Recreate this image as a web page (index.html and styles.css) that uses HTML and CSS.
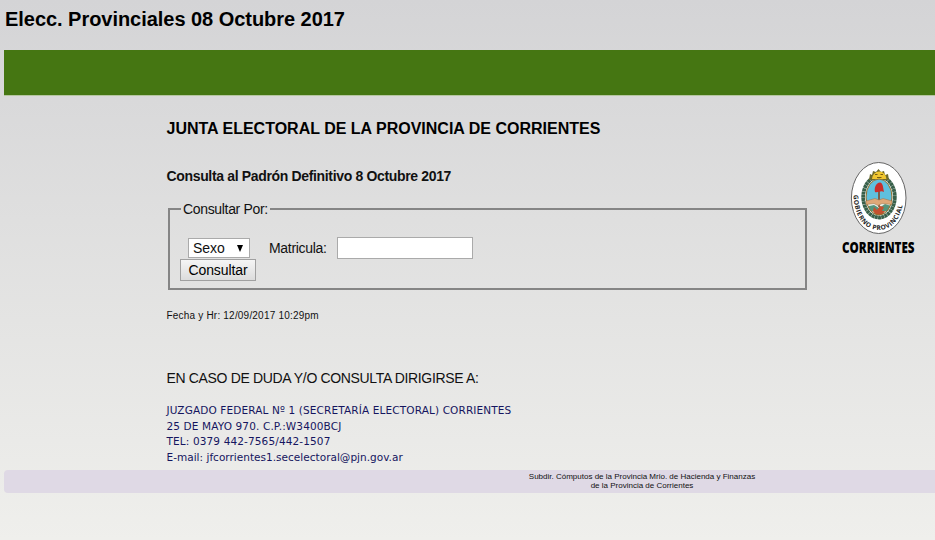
FILE: index.html
```
<!DOCTYPE html>
<html lang="es">
<head>
    <meta charset="UTF-8">
    <title>Elecc. Provinciales 08 Octubre 2017</title>
    <link rel="stylesheet" href="styles.css">
</head>
<body>

<div class="page">
    <h1>Elecc. Provinciales 08 Octubre 2017</h1>
    <div class="banner"></div>

    <div class="main">
        <div class="content">
            <h2>JUNTA ELECTORAL DE LA PROVINCIA DE CORRIENTES</h2>
            <h3>Consulta al Padrón Definitivo 8 Octubre 2017</h3>

            <form>
                <fieldset>
                    <legend>Consultar Por:</legend>
                    <div class="fields">
                        <div class="select">Sexo <span class="arrow"></span></div>
                        <label for="matricula">Matricula:</label>
                        <input type="text" id="matricula">
                    </div>
                    <button type="button">Consultar</button>
                </fieldset>
            </form>

            <p class="fecha">Fecha y Hr: 12/09/2017 10:29pm</p>
            <p class="duda">EN CASO DE DUDA Y/O CONSULTA DIRIGIRSE A:</p>
            <div class="contacto">
                <div>JUZGADO FEDERAL Nº 1 (SECRETARÍA ELECTORAL) CORRIENTES</div>
                <div>25 DE MAYO 970. C.P.:W3400BCJ</div>
                <div>TEL: 0379 442-7565/442-1507</div>
                <div class="mail">E-mail: jfcorrientes1.secelectoral@pjn.gov.ar</div>
            </div>
        </div>

        <svg class="logo" width="90" height="105" viewBox="0 0 90 105">
            <defs>
                <path id="arco" d="M15.500 35 C16 56 26 70 40.700 70 C55.500 70 65.500 56 66 33"/>
                <clipPath id="campo"><ellipse cx="41" cy="37" rx="13" ry="18"/></clipPath>
            </defs>
            <ellipse cx="40.700" cy="38" rx="27.300" ry="35.500" fill="#fff" stroke="#666" stroke-width="1"/>
            <!-- laureles -->
            <ellipse cx="41" cy="37" rx="15.800" ry="20.500" fill="none" stroke="#38604a" stroke-width="3.800" stroke-dasharray="3 .3"/>
            <!-- sol -->
            <path d="M31 20 L32 14 L34 15 L35 11 L38 12 L40.500 9 L43 12 L46 11 L47 15 L50 14 L51 20 Z" fill="#6d6a2c"/>
            <path d="M34 19 a7.200 7.500 0 0 1 14.400 0 Z" fill="#f0c630"/>
            <path d="M37 14.500 h2.500 M42.500 14.500 h2.500 M39 17.500 h4.500" stroke="#795e12" stroke-width="1"/>
            <!-- escudo -->
            <g clip-path="url(#campo)">
                <rect x="27" y="18" width="28" height="40" fill="#5fc0de"/>
                <rect x="27" y="42" width="28" height="17" fill="#e8eee9"/>
                <path d="M27 47 L36 45 L41 48 L47 44 L56 47 V59 H27 Z" fill="#54957d"/>
                <path d="M34 52 H48 M36 55 H46" stroke="#e9e0c6" stroke-width="1.500"/>
                <path d="M36 47 L39 50 L42 46 L46 47 L44 51 H47 L44 55 H38 L35 51 Z" fill="#c4502f"/>
            </g>
            <ellipse cx="41" cy="37" rx="13" ry="18" fill="none" stroke="#94702a" stroke-width="1"/>
            <path d="M41 31 V47" stroke="#80421d" stroke-width="1.500"/>
            <path d="M37 32 C36 28 38 22.500 42 22.500 C45 23 45 27 46 32 C43 30 40 33 37 32 Z" fill="#c92f2b"/>
            <path d="M28 41 L37 38.500 L41 40 L45 38.500 L54 41 V44.500 L44 43.500 L40 45.500 L36 43.500 L28 44.500 Z" fill="#dfa878" stroke="#9a7042" stroke-width=".5"/>
            <text class="lema"><textPath href="#arco">GOBIERNO PROVINCIAL</textPath></text>
            <text class="marca" transform="translate(4 93) scale(.75 1)">CORRIENTES</text>
        </svg>
    </div>

    <div class="footer">
        <div>Subdir. Cómputos de la Provincia Mrio. de Hacienda y Finanzas</div>
        <div>de la Provincia de Corrientes</div>
    </div>
</div>

</body>
</html>
```

FILE: styles.css
```
html {
    height: 100%;
}
body {
    margin: 0;
    padding-left: 4px;
    height: 540px;
    box-sizing: border-box;
    font-family: "Liberation Sans", Arial, sans-serif;
    font-size: 14px;
    color: #111;
    background: linear-gradient(#d4d4d6, #efefec);
}
h1, h2, h3, p {
    margin: 0;
    white-space: nowrap;
}
h1 {
    height: 50px;
    padding-left: 1px;
    line-height: 38px;
    font-size: 20px;
    letter-spacing: -0.04px;
    color: #000;
}
.banner {
    height: 45px;
    background: #457612;
    border-bottom: 1px solid #b5c6a0;
}
.main {
    display: flex;
    height: 374px;
}
.content {
    width: 640.5px;
    margin-left: 162.5px;
}
h2 {
    padding-top: 23px;
    line-height: 20px;
    font-size: 16px;
    color: #000;
}
h3 {
    padding-top: 27px;
    line-height: 20px;
    font-size: 14px;
    letter-spacing: -0.34px;
}

/* formulario */
fieldset {
    height: 90px;
    box-sizing: border-box;
    margin: 14px 0 0 1.5px;
    padding: 0 0 0 10px;
    border: 2px solid #858585;
}
legend {
    margin-left: 1px;
    padding: 0 2px;
    line-height: 18px;
    letter-spacing: -0.33px;
}
.fields {
    display: flex;
    align-items: center;
    height: 22px;
    padding: 19px 0 0 8px;
}
.select {
    display: flex;
    align-items: center;
    justify-content: space-between;
    width: 62px;
    height: 20px;
    box-sizing: border-box;
    padding: 0 6px 0 4px;
    border: 1px solid #aaa;
    background: #fff;
}
.arrow {
    border: 3.5px solid transparent;
    border-top: 7px solid #000;
    border-bottom: 0;
}
label {
    width: 68px;
    margin-left: 19px;
    letter-spacing: -0.3px;
}
input {
    width: 136px;
    height: 22px;
    box-sizing: border-box;
    border: 1px solid #aaa;
    background: #fff;
}
button {
    display: block;
    width: 76px;
    height: 22px;
    padding: 0;
    border: 1px solid #a0a0a0;
    font: 14px "Liberation Sans", Arial, sans-serif;
    letter-spacing: -0.1px;
    background: linear-gradient(#f5f5f5, #dcdcdc);
}

.fecha {
    padding-top: 19px;
    line-height: 14px;
    font-size: 10px;
    letter-spacing: 0.2px;
}
.duda {
    padding-top: 46px;
    line-height: 18px;
    letter-spacing: -0.34px;
}
.contacto {
    margin-top: 16px;
    font-family: "DejaVu Sans", Verdana, sans-serif;
    font-size: 10.5px;
    line-height: 15.5px;
    letter-spacing: 0.13px;
    color: #15155f;
    white-space: nowrap;
}
.mail {
    letter-spacing: 0.02px;
}

/* escudo */
.logo {
    margin: 64px 0 0 31px;
}
.lema {
    font: bold 6.5px "Open Sans", sans-serif;
    letter-spacing: 0.5px;
    fill: #222;
}
.marca {
    font: 800 15.5px "Open Sans", sans-serif;
    fill: #000;
}

.footer {
    height: 21px;
    padding: 2px 0 0 345px;
    border-radius: 4px 0 0 4px;
    background: #dfd9e5;
    font-size: 8px;
    line-height: 9px;
    text-align: center;
}
```
